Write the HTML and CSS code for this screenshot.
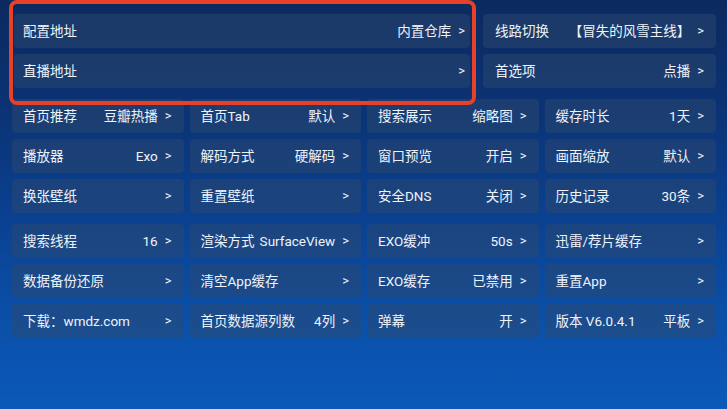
FILE: index.html
```html
<!DOCTYPE html>
<html lang="zh">
<head>
<meta charset="utf-8">
<title>设置</title>
<link rel="stylesheet" href="styles.css">
</head>
<body>
<div class="page">
  <div class="top">
    <div class="focus-group">
      <div class="card wide"><span class="label">配置地址</span><span class="value">内置仓库<i class="arrow">&gt;</i></span></div>
      <div class="card wide"><span class="label">直播地址</span><span class="value"><i class="arrow">&gt;</i></span></div>
    </div>
    <div class="side-group">
      <div class="card"><span class="label">线路切换</span><span class="value">【冒失的风雪主线】<i class="arrow">&gt;</i></span></div>
      <div class="card"><span class="label">首选项</span><span class="value">点播<i class="arrow">&gt;</i></span></div>
    </div>
  </div>

  <div class="grid">
    <div class="card"><span class="label">首页推荐</span><span class="value">豆瓣热播<i class="arrow">&gt;</i></span></div>
    <div class="card"><span class="label">首页Tab</span><span class="value">默认<i class="arrow">&gt;</i></span></div>
    <div class="card"><span class="label">搜索展示</span><span class="value">缩略图<i class="arrow">&gt;</i></span></div>
    <div class="card"><span class="label">缓存时长</span><span class="value">1天<i class="arrow">&gt;</i></span></div>

    <div class="card"><span class="label">播放器</span><span class="value">Exo<i class="arrow">&gt;</i></span></div>
    <div class="card"><span class="label">解码方式</span><span class="value">硬解码<i class="arrow">&gt;</i></span></div>
    <div class="card"><span class="label">窗口预览</span><span class="value">开启<i class="arrow">&gt;</i></span></div>
    <div class="card"><span class="label">画面缩放</span><span class="value">默认<i class="arrow">&gt;</i></span></div>

    <div class="card"><span class="label">换张壁纸</span><span class="value"><i class="arrow">&gt;</i></span></div>
    <div class="card"><span class="label">重置壁纸</span><span class="value"><i class="arrow">&gt;</i></span></div>
    <div class="card"><span class="label">安全DNS</span><span class="value">关闭<i class="arrow">&gt;</i></span></div>
    <div class="card"><span class="label">历史记录</span><span class="value">30条<i class="arrow">&gt;</i></span></div>
  </div>

  <div class="grid grid-lower">
    <div class="card"><span class="label">搜索线程</span><span class="value">16<i class="arrow">&gt;</i></span></div>
    <div class="card"><span class="label">渲染方式</span><span class="value">SurfaceView<i class="arrow">&gt;</i></span></div>
    <div class="card"><span class="label">EXO缓冲</span><span class="value">50s<i class="arrow">&gt;</i></span></div>
    <div class="card"><span class="label">迅雷/荐片缓存</span><span class="value"><i class="arrow">&gt;</i></span></div>

    <div class="card"><span class="label">数据备份还原</span><span class="value"><i class="arrow">&gt;</i></span></div>
    <div class="card"><span class="label">清空App缓存</span><span class="value"><i class="arrow">&gt;</i></span></div>
    <div class="card"><span class="label">EXO缓存</span><span class="value">已禁用<i class="arrow">&gt;</i></span></div>
    <div class="card"><span class="label">重置App</span><span class="value"><i class="arrow">&gt;</i></span></div>

    <div class="card"><span class="label">下载：wmdz.com</span><span class="value"><i class="arrow">&gt;</i></span></div>
    <div class="card"><span class="label">首页数据源列数</span><span class="value">4列<i class="arrow">&gt;</i></span></div>
    <div class="card"><span class="label">弹幕</span><span class="value">开<i class="arrow">&gt;</i></span></div>
    <div class="card"><span class="label">版本 V6.0.4.1</span><span class="value">平板<i class="arrow">&gt;</i></span></div>
  </div>
</div>
</body>
</html>
```

FILE: styles.css
```css
* {
  box-sizing: border-box;
}

html, body {
  margin: 0;
  padding: 0;
  width: 727px;
  height: 409px;
  overflow: hidden;
}

body {
  font-family: Roboto, "Noto Sans CJK SC", sans-serif;
  font-size: 13.5px;
  color: #eef3fa;
  background: linear-gradient(180deg, #0b2a5f 0%, #0b3273 25%, #0a3f8d 50%, #0a4ea6 75%, #0a5ab9 100%);
}

.page {
  width: 727px;
  height: 409px;
}

.top {
  display: flex;
  padding: 14px 11px 0 14px;
  gap: 13px;
}

.focus-group {
  position: relative;
  width: 456px;
  display: flex;
  flex-direction: column;
  gap: 6px;
}

.focus-group::after {
  content: "";
  position: absolute;
  top: -14px;
  left: -5px;
  right: -6px;
  bottom: -17px;
  border: 4px solid #e8412a;
  border-radius: 8px;
  pointer-events: none;
}

.side-group {
  flex: 1;
  display: flex;
  flex-direction: column;
  gap: 6px;
}

.card {
  height: 34px;
  display: flex;
  align-items: center;
  justify-content: space-between;
  gap: 4px;
  padding: 0 12px 0 11px;
  background: rgba(43, 71, 110, 0.5);
  border-radius: 4px;
  white-space: nowrap;
}

.card.wide {
  padding: 0 5px 0 9px;
}

.side-group .card {
  padding: 0 12px 0 12px;
}

.label {
  line-height: 34px;
}

.value {
  display: flex;
  align-items: center;
  line-height: 34px;
}

.arrow {
  font-style: normal;
  margin-left: 7px;
  font-size: 13px;
}

.grid {
  display: grid;
  grid-template-columns: repeat(4, 1fr);
  column-gap: 6px;
  row-gap: 6px;
  margin: 11px 11px 0 12px;
}

.grid-lower {
  margin-top: 11px;
}
```
